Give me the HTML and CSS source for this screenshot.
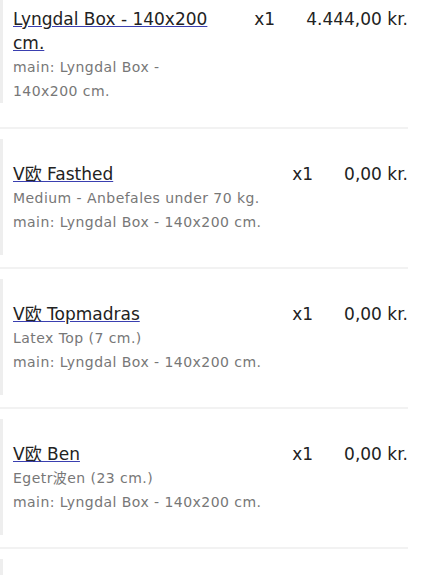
FILE: index.html
```html
<!DOCTYPE html>
<html lang="da">
<head>
    <meta charset="UTF-8">
    <meta name="viewport" content="width=device-width, initial-scale=1.0">
    <title>Kurv</title>
    <link rel="stylesheet" href="styles.css">
</head>
<body>
    <div class="cart">
        <div class="item item-first">
            <div class="row">
                <div class="info">
                    <a class="name" href="#">Lyngdal Box - 140x200 cm.</a>
                    <div class="meta">main: Lyngdal Box - 140x200 cm.</div>
                </div>
                <div class="qty">x1</div>
                <div class="price">4.444,00 kr.</div>
            </div>
        </div>
        <div class="item">
            <div class="row">
                <div class="info">
                    <a class="name" href="#">V欧 Fasthed</a>
                    <div class="meta">Medium - Anbefales under 70 kg.</div>
                    <div class="meta">main: Lyngdal Box - 140x200 cm.</div>
                </div>
                <div class="qty">x1</div>
                <div class="price">0,00 kr.</div>
            </div>
        </div>
        <div class="item">
            <div class="row">
                <div class="info">
                    <a class="name" href="#">V欧 Topmadras</a>
                    <div class="meta">Latex Top (7 cm.)</div>
                    <div class="meta">main: Lyngdal Box - 140x200 cm.</div>
                </div>
                <div class="qty">x1</div>
                <div class="price">0,00 kr.</div>
            </div>
        </div>
        <div class="item">
            <div class="row">
                <div class="info">
                    <a class="name" href="#">V欧 Ben</a>
                    <div class="meta">Egetr波en (23 cm.)</div>
                    <div class="meta">main: Lyngdal Box - 140x200 cm.</div>
                </div>
                <div class="qty">x1</div>
                <div class="price">0,00 kr.</div>
            </div>
        </div>
        <div class="item">
            <div class="row"></div>
        </div>
    </div>
</body>
</html>
```

FILE: styles.css
```css
body {
    margin: 0;
    font-family: "DejaVu Sans", Verdana, "Noto Sans CJK SC", sans-serif;
    background-color: white;
    color: #222;
}
.cart {
    width: 408px;
}
.item {
    padding: 10px 0 12px;
    border-bottom: 2px solid #f2f2f2;
}
.item-first {
    margin-top: -26px;
    padding-bottom: 24px;
}
.row {
    display: flex;
    align-items: flex-start;
    height: 72px;
    padding: 23px 0 21px 10px;
    border-left: 3px solid #eeeeee;
}
.item-first .row {
    padding-bottom: 0;
    height: 96px;
}
.info {
    flex: 1;
    min-width: 0;
}
.name {
    font-size: 17px;
    line-height: 24px;
    color: #222;
    text-decoration: underline;
    text-decoration-color: #3a3fb0;
}
.meta {
    font-size: 14px;
    line-height: 24px;
    letter-spacing: 0.45px;
    color: #777;
}
.qty, .price {
    font-size: 17px;
    line-height: 24px;
    white-space: nowrap;
}
.qty {
    margin-left: 30px;
}
.price {
    margin-left: 31px;
}
```
